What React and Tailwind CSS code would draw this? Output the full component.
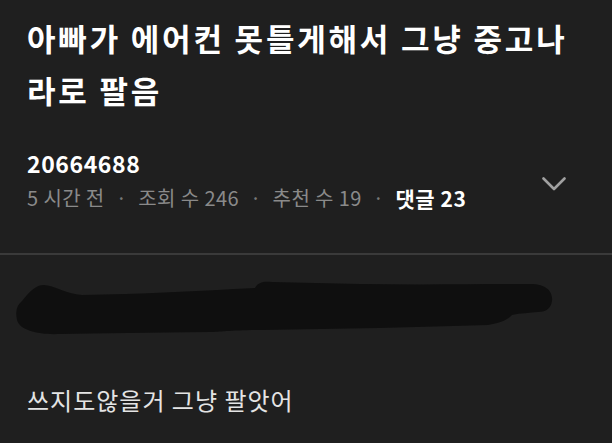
import React from 'react';

function Dot() {
  return <span className="mx-[11px] text-[#777]">·</span>;
}

export default function App() {
  return (
    <div className="w-full h-[443px] bg-[#1f1f1f] overflow-hidden font-['Noto_Sans_CJK_KR',sans-serif]">
      {/* --- POST HEADER --- */}
      <div className="px-[27px] pt-[12px] pb-[41px]">
        <h1 className="text-[31px] font-bold leading-[52px] text-white tracking-[2.8px] whitespace-nowrap">
          아빠가 에어컨 못틀게해서 그냥 중고나
          <br />
          라로 팔음
        </h1>

        <div className="mt-[32px] flex items-center justify-between pr-[19px]">
          <div>
            <p className="text-[23px] font-bold leading-[30px] text-white tracking-[0.6px]">20664688</p>
            <p className="mt-[6px] text-[20px] leading-[28px] text-[#8a8a8a] tracking-[0.4px] flex items-center">
              <span>5 시간 전</span>
              <Dot />
              <span>조회 수 246</span>
              <Dot />
              <span>추천 수 19</span>
              <Dot />
              <span className="font-bold text-white text-[21px] tracking-[0.6px]">댓글 23</span>
            </p>
          </div>
          <svg width="24" height="14" viewBox="0 0 24 14" className="mt-[8px]">
            <polyline points="1.5,1.5 12,12 22.5,1.5" fill="none" stroke="#a0a0a0" strokeWidth="2.6" strokeLinecap="round" strokeLinejoin="round" />
          </svg>
        </div>
      </div>

      <div className="h-[2px] bg-[#3a3a3a]" />

      {/* --- COMMENT (scribbled name) --- */}
      <svg width="612" height="64" viewBox="0 0 612 64" className="mt-[20px] block">
        <path
          d="M22 26 C30 16 36 10 44 10 C54 10 66 19 82 20 C140 19 200 16 255 13 C258 7 264 6 272 7 C300 8 330 8 360 9 C420 10 480 9 530 9 C548 9 553 18 552 26 C551 34 545 37 538 37 C530 38 520 38 512 40 C508 45 500 48 488 50 C420 52 340 54 260 55 C230 55 220 57 210 57 C150 58 100 58 60 59 C40 60 20 56 17 45 C15 36 17 30 22 26 Z"
          fill="#0f0f0f"
        />
      </svg>

      <p className="mt-[45px] px-[27px] text-[24px] leading-[32px] text-[#e4e4e4] tracking-[1px]">
        쓰지도않을거 그냥 팔앗어
      </p>
    </div>
  );
}
